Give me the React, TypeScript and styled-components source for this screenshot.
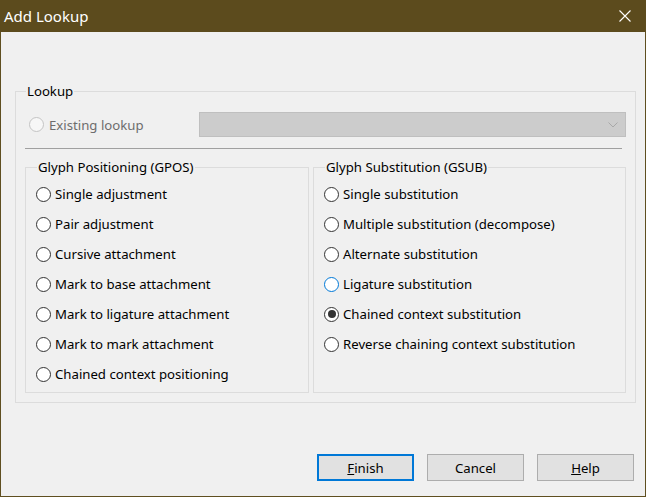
import React from 'react';
import styled, { createGlobalStyle } from 'styled-components';

const Global = createGlobalStyle`
  html, body { margin: 0; padding: 0; background: #f0f0f0; }
  body { font-family: "Noto Sans", "Segoe UI", sans-serif; font-size: 13px; color: #000; }
  * { box-sizing: border-box; }
`;

const Window = styled.div`
  width: 646px;
  height: 497px;
  display: flex;
  flex-direction: column;
  background: #f0f0f0;
  border: 1px solid #5f4f20;
  border-top: none;
`;

const TitleBar = styled.div`
  height: 32px;
  margin: 0 -1px;
  background: #5c4b1d;
  color: #fff;
  display: flex;
  align-items: center;
  justify-content: space-between;
  padding: 0 15px 0 4px;
  font-size: 15px;
`;

const Title = styled.span`
  line-height: 20px;
`;

const CloseBtn = styled.span`
  display: flex;
  width: 12px;
  height: 12px;
`;

const Body = styled.div`
  flex: 1;
  display: flex;
  flex-direction: column;
  padding: 49px 9px 15px 14px;
`;

const Group = styled.fieldset<{ $w?: number }>`
  margin: 0;
  min-width: 0;
  border: 1px solid #dcdcdc;
  padding: ${p => (p.$w ? '2px 10px 3px' : '0 9px 9px')};
  ${p => (p.$w ? `width: ${p.$w}px;` : '')}
  display: flex;
  flex-direction: column;
`;

const Legend = styled.legend`
  margin-left: 1px;
  padding: 0 1px;
  line-height: 20px;
  font-size: 13.2px;
`;

const TopRow = styled.div`
  margin-top: 11px;
  height: 25px;
  display: flex;
  align-items: center;
  padding-left: 4px;
`;

const RadioLabel = styled.label<{ $w?: number; $disabled?: boolean }>`
  display: flex;
  align-items: center;
  gap: ${p => (p.$disabled ? 5 : 4)}px;
  height: 30px;
  font-size: 13.2px;
  color: ${p => (p.$disabled ? '#6d6d6d' : '#000')};
  ${p => (p.$w ? `width: ${p.$w}px;` : '')}
  white-space: nowrap;
`;

const Circle = styled.span<{ $state?: 'disabled' | 'hover' | 'normal' }>`
  width: 15px;
  height: 15px;
  flex: none;
  border-radius: 50%;
  border: 1px solid
    ${p => (p.$state === 'disabled' ? '#c4c4c4' : p.$state === 'hover' ? '#0078d7' : '#333')};
  background: ${p => (p.$state === 'disabled' ? '#f7f7f7' : '#fff')};
  display: flex;
  align-items: center;
  justify-content: center;
`;

const Dot = styled.span`
  width: 8px;
  height: 8px;
  border-radius: 50%;
  background: #333;
`;

const Combo = styled.div`
  flex: 1;
  height: 25px;
  background: #cccccc;
  border: 1px solid #bfbfbf;
  display: flex;
  align-items: center;
  justify-content: flex-end;
  padding-right: 7px;
`;

const Separator = styled.div`
  margin: 11px 4px 0 0;
  height: 1px;
  background: #a0a0a0;
`;

const Columns = styled.div`
  margin-top: 8px;
  display: flex;
  gap: 4px;
  align-items: stretch;
`;

const Spacer = styled.div`
  flex: 1;
`;

const ButtonRow = styled.div`
  display: flex;
  justify-content: flex-end;
  gap: 13px;
  padding-right: 2px;
`;

const Button = styled.button<{ $default?: boolean }>`
  width: 97px;
  height: 27px;
  background: #e1e1e1;
  border: ${p => (p.$default ? '2px solid #0078d7' : '1px solid #adadad')};
  font-family: inherit;
  font-size: 13.2px;
  color: #000;
  padding: 0;
`;

type RadioProps = { label: string; state?: 'disabled' | 'hover' | 'normal'; checked?: boolean; w?: number };

const Radio = ({ label, state = 'normal', checked, w }: RadioProps) => (
  <RadioLabel $w={w} $disabled={state === 'disabled'}>
    <Circle $state={state}>{checked && <Dot />}</Circle>
    <span>{label}</span>
  </RadioLabel>
);

const gpos = [
  'Single adjustment',
  'Pair adjustment',
  'Cursive attachment',
  'Mark to base attachment',
  'Mark to ligature attachment',
  'Mark to mark attachment',
  'Chained context positioning',
];

const gsub: { label: string; state?: 'hover'; checked?: boolean }[] = [
  { label: 'Single substitution' },
  { label: 'Multiple substitution (decompose)' },
  { label: 'Alternate substitution' },
  { label: 'Ligature substitution', state: 'hover' },
  { label: 'Chained context substitution', checked: true },
  { label: 'Reverse chaining context substitution' },
];

export default function App() {
  return (
    <>
      <Global />
      <Window>
        <TitleBar>
          <Title>Add Lookup</Title>
          <CloseBtn>
            <svg width="12" height="12" viewBox="0 0 12 12">
              <path d="M0.5 0.5 L11.5 11.5 M11.5 0.5 L0.5 11.5" stroke="#fff" strokeWidth="1.1" />
            </svg>
          </CloseBtn>
        </TitleBar>
        <Body>
          <Group>
            <Legend>Lookup</Legend>
            <TopRow>
              <Radio label="Existing lookup" state="disabled" w={170} />
              <Combo>
                <svg width="10" height="6" viewBox="0 0 10 6">
                  <polyline points="0.5,0.5 5,5 9.5,0.5" fill="none" stroke="#a8a8a8" strokeWidth="1" />
                </svg>
              </Combo>
            </TopRow>
            <Separator />
            <Columns>
              <Group $w={284}>
                <Legend>Glyph Positioning (GPOS)</Legend>
                {gpos.map(l => (
                  <Radio key={l} label={l} />
                ))}
              </Group>
              <Group $w={313}>
                <Legend>Glyph Substitution (GSUB)</Legend>
                {gsub.map(r => (
                  <Radio key={r.label} label={r.label} state={r.state} checked={r.checked} />
                ))}
              </Group>
            </Columns>
          </Group>
          <Spacer />
          <ButtonRow>
            <Button $default>
              <u>F</u>inish
            </Button>
            <Button>Cancel</Button>
            <Button>
              <u>H</u>elp
            </Button>
          </ButtonRow>
        </Body>
      </Window>
    </>
  );
}
